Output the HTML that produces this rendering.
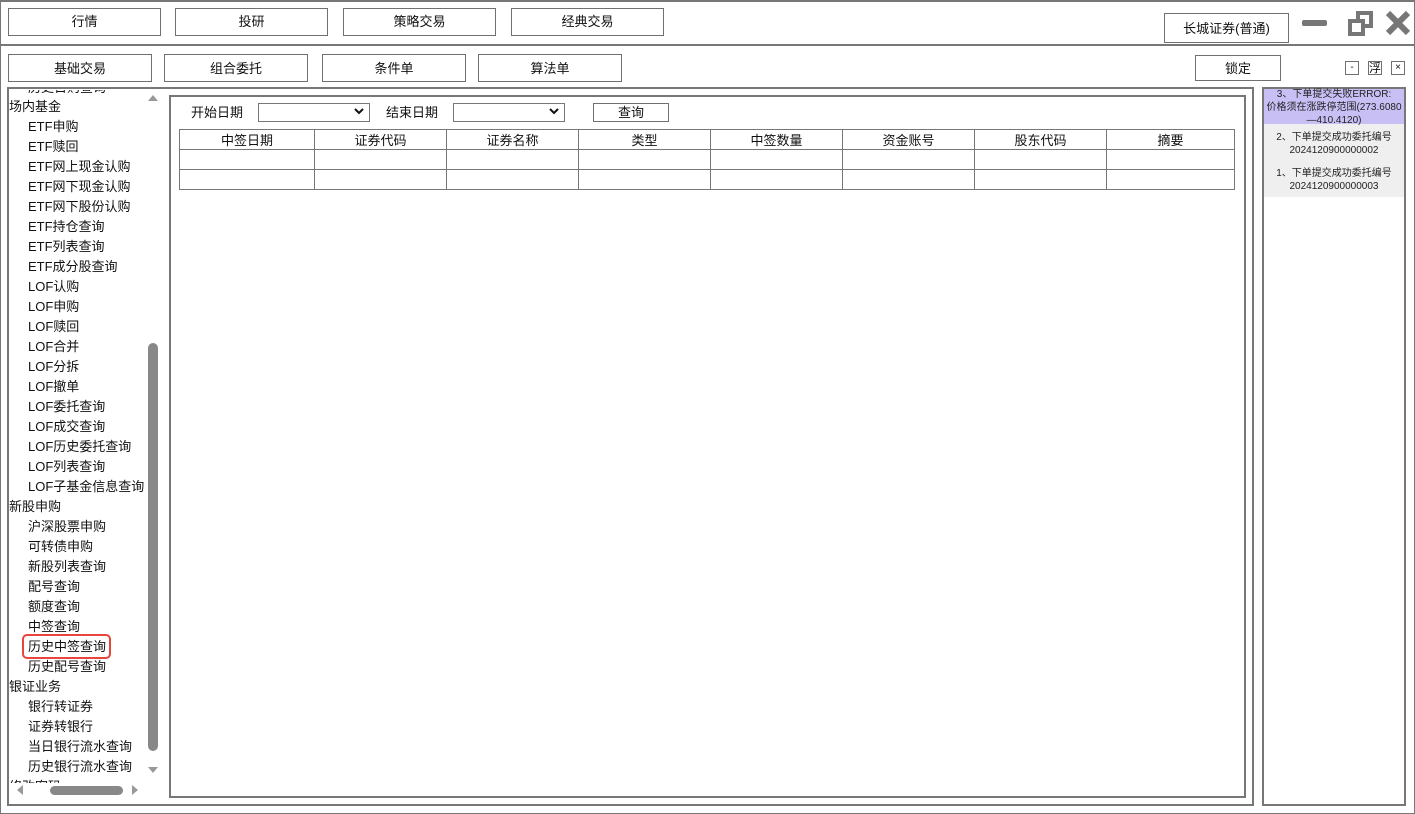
<!DOCTYPE html>
<html><head><meta charset="utf-8"><style>
*{box-sizing:border-box;margin:0;padding:0}
body{width:1415px;height:814px;background:#fff;font-family:"Liberation Sans","Noto Sans CJK SC",sans-serif;font-size:13px;color:#111;position:relative;overflow:hidden}
.a{position:absolute}
.btn{position:absolute;border:1px solid #707070;background:#fff;text-align:center;font-size:13px}
.box{position:absolute;border:2px solid #777}
.tree{position:absolute;left:9px;top:90px;width:140px;height:693px;overflow:hidden}
.tree div{position:absolute;white-space:nowrap;height:20px;line-height:20px}
table{border-collapse:collapse;position:absolute;left:179px;top:129px;width:1056px;table-layout:fixed}
td{border:1px solid #777;height:20px;text-align:center;font-size:13px;padding:0}
.rp{position:absolute;left:1264px;width:140px;font-size:10px;line-height:13px;text-align:center;color:#222}
</style></head><body>
<div class="a" style="left:0;top:0;width:1415px;height:814px;border:1px solid #777;border-top:2px solid #777"></div>
<div class="a" style="left:0;top:44px;width:1415px;height:2px;background:#777"></div>
<div class="btn" style="left:8px;top:8px;width:153px;height:28px;line-height:26px">行情</div>
<div class="btn" style="left:175px;top:8px;width:153px;height:28px;line-height:26px">投研</div>
<div class="btn" style="left:343px;top:8px;width:153px;height:28px;line-height:26px">策略交易</div>
<div class="btn" style="left:511px;top:8px;width:153px;height:28px;line-height:26px">经典交易</div>
<div class="btn" style="left:1164px;top:13px;width:125px;height:30px;line-height:30px">长城证券(普通)</div>
<div class="a" style="left:1302px;top:20px;width:25px;height:6px;background:#777;border-radius:2px"></div>
<div class="a" style="left:1356px;top:11px;width:17px;height:17px;border:4px solid #777"></div>
<div class="a" style="left:1348px;top:19px;width:17px;height:17px;border:4px solid #777;background:#fff"></div>
<svg class="a" style="left:1385px;top:10px" width="26" height="26"><path d="M3 3L23 23M23 3L3 23" stroke="#777" stroke-width="6"/></svg>
<div class="btn" style="left:8px;top:54px;width:144px;height:28px;line-height:28px">基础交易</div>
<div class="btn" style="left:164px;top:54px;width:144px;height:28px;line-height:28px">组合委托</div>
<div class="btn" style="left:322px;top:54px;width:144px;height:28px;line-height:28px">条件单</div>
<div class="btn" style="left:478px;top:54px;width:144px;height:28px;line-height:28px">算法单</div>
<div class="btn" style="left:1195px;top:55px;width:86px;height:26px;line-height:26px">锁定</div>
<div class="btn" style="left:1345px;top:61px;width:14px;height:14px;line-height:12px;font-size:10px">-</div>
<div class="btn" style="left:1368px;top:61px;width:14px;height:14px;line-height:12px;font-size:12px">浮</div>
<div class="btn" style="left:1391px;top:61px;width:14px;height:14px;line-height:12px;font-size:10px">×</div>
<div class="box" style="left:7px;top:87px;width:1247px;height:719px"></div>
<div class="a" style="left:9px;top:89px;width:152px;height:710px;background:#fff"></div>
<div class="tree">
<div style="top:-12px;left:19px">历史日购查询</div>
<div style="top:7px;left:0">场内基金</div>
<div style="top:27px;left:19px">ETF申购</div>
<div style="top:47px;left:19px">ETF赎回</div>
<div style="top:67px;left:19px">ETF网上现金认购</div>
<div style="top:87px;left:19px">ETF网下现金认购</div>
<div style="top:107px;left:19px">ETF网下股份认购</div>
<div style="top:127px;left:19px">ETF持仓查询</div>
<div style="top:147px;left:19px">ETF列表查询</div>
<div style="top:167px;left:19px">ETF成分股查询</div>
<div style="top:187px;left:19px">LOF认购</div>
<div style="top:207px;left:19px">LOF申购</div>
<div style="top:227px;left:19px">LOF赎回</div>
<div style="top:247px;left:19px">LOF合并</div>
<div style="top:267px;left:19px">LOF分拆</div>
<div style="top:287px;left:19px">LOF撤单</div>
<div style="top:307px;left:19px">LOF委托查询</div>
<div style="top:327px;left:19px">LOF成交查询</div>
<div style="top:347px;left:19px">LOF历史委托查询</div>
<div style="top:367px;left:19px">LOF列表查询</div>
<div style="top:387px;left:19px">LOF子基金信息查询</div>
<div style="top:407px;left:0">新股申购</div>
<div style="top:427px;left:19px">沪深股票申购</div>
<div style="top:447px;left:19px">可转债申购</div>
<div style="top:467px;left:19px">新股列表查询</div>
<div style="top:487px;left:19px">配号查询</div>
<div style="top:507px;left:19px">额度查询</div>
<div style="top:527px;left:19px">中签查询</div>
<div style="top:547px;left:19px">历史中签查询</div>
<div style="top:567px;left:19px">历史配号查询</div>
<div style="top:587px;left:0">银证业务</div>
<div style="top:607px;left:19px">银行转证券</div>
<div style="top:627px;left:19px">证券转银行</div>
<div style="top:647px;left:19px">当日银行流水查询</div>
<div style="top:667px;left:19px">历史银行流水查询</div>
<div style="top:687px;left:0">修改密码</div>
</div>
<div class="a" style="left:22px;top:634px;width:89px;height:25px;border:2px solid #e8453c;border-radius:5px"></div>
<div class="a" style="left:148px;top:343px;width:10px;height:408px;background:#888;border-radius:5px"></div>
<svg class="a" style="left:148px;top:94px" width="10" height="8"><path d="M0 7L5 1L10 7Z" fill="#999"/></svg>
<svg class="a" style="left:148px;top:766px" width="10" height="8"><path d="M0 1L5 7L10 1Z" fill="#999"/></svg>
<div class="a" style="left:50px;top:786px;width:73px;height:9px;background:#888;border-radius:5px"></div>
<svg class="a" style="left:16px;top:785px" width="8" height="10"><path d="M7 0L1 5L7 10Z" fill="#999"/></svg>
<svg class="a" style="left:131px;top:785px" width="8" height="10"><path d="M1 0L7 5L1 10Z" fill="#999"/></svg>
<div class="box" style="left:169px;top:95px;width:1077px;height:703px"></div>
<div class="a" style="left:191px;top:104px;line-height:18px">开始日期</div>
<div class="a" style="left:258px;top:103px;width:112px;height:19px;border:1px solid #777"></div>
<svg class="a" style="left:354px;top:108px" width="10" height="8"><path d="M1 1L5 5L9 1" stroke="#111" stroke-width="2" fill="none"/></svg>
<div class="a" style="left:386px;top:104px;line-height:18px">结束日期</div>
<div class="a" style="left:453px;top:103px;width:112px;height:19px;border:1px solid #777"></div>
<svg class="a" style="left:549px;top:108px" width="10" height="8"><path d="M1 1L5 5L9 1" stroke="#111" stroke-width="2" fill="none"/></svg>
<div class="btn" style="left:593px;top:103px;width:76px;height:19px;line-height:17px">查询</div>
<table><colgroup><col style="width:135px"><col style="width:132px"><col style="width:132px"><col style="width:132px"><col style="width:132px"><col style="width:132px"><col style="width:132px"><col></colgroup>
<tr><td>中签日期</td><td>证券代码</td><td>证券名称</td><td>类型</td><td>中签数量</td><td>资金账号</td><td>股东代码</td><td>摘要</td></tr>
<tr><td></td><td></td><td></td><td></td><td></td><td></td><td></td><td></td></tr>
<tr><td></td><td></td><td></td><td></td><td></td><td></td><td></td><td></td></tr>
</table>
<div class="box" style="left:1262px;top:87px;width:144px;height:719px"></div>
<div class="a" style="left:1264px;top:89px;width:140px;height:108px;background:#efefef"></div>
<div class="a" style="left:1264px;top:89px;width:140px;height:35px;background:#c8c0f5"></div>
<div class="rp" style="top:88px">3、下单提交失败ERROR:<br>价格须在涨跌停范围(273.6080<br>—410.4120)</div>
<div class="rp" style="top:131px">2、下单提交成功委托编号<br>2024120900000002</div>
<div class="rp" style="top:167px">1、下单提交成功委托编号<br>2024120900000003</div>
</body></html>
